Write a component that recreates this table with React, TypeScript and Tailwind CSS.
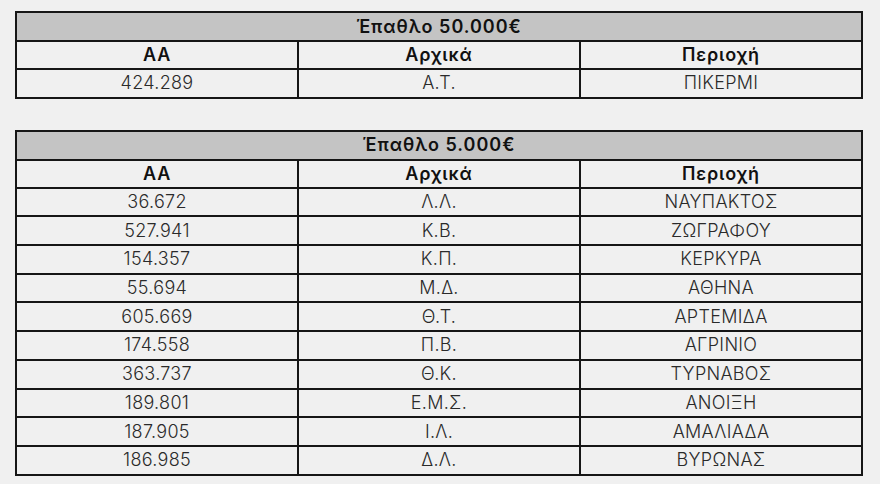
const bigPrize = [{ aa: "424.289", initials: "Α.Τ.", area: "ΠΙΚΕΡΜΙ" }];

const smallPrize = [
  { aa: "36.672", initials: "Λ.Λ.", area: "ΝΑΥΠΑΚΤΟΣ" },
  { aa: "527.941", initials: "Κ.Β.", area: "ΖΩΓΡΑΦΟΥ" },
  { aa: "154.357", initials: "Κ.Π.", area: "ΚΕΡΚΥΡΑ" },
  { aa: "55.694", initials: "Μ.Δ.", area: "ΑΘΗΝΑ" },
  { aa: "605.669", initials: "Θ.Τ.", area: "ΑΡΤΕΜΙΔΑ" },
  { aa: "174.558", initials: "Π.Β.", area: "ΑΓΡΙΝΙΟ" },
  { aa: "363.737", initials: "Θ.Κ.", area: "ΤΥΡΝΑΒΟΣ" },
  { aa: "189.801", initials: "Ε.Μ.Σ.", area: "ΑΝΟΙΞΗ" },
  { aa: "187.905", initials: "Ι.Λ.", area: "ΑΜΑΛΙΑΔΑ" },
  { aa: "186.985", initials: "Δ.Λ.", area: "ΒΥΡΩΝΑΣ" },
];

type Winner = { aa: string; initials: string; area: string };

function PrizeTable({ title, rows }: { title: string; rows: Winner[] }) {
  return (
    <table className="w-full table-fixed border-collapse text-center">
      <thead>
        <tr className="h-[29px]">
          <th colSpan={3} className="border-2 border-[#161616] bg-[#c4c4c4] text-[18px] font-semibold tracking-[1px] text-[#111] leading-none">
            {title}
          </th>
        </tr>
        <tr className="h-[28px]">
          <th className="border-2 border-[#161616] text-[18px] font-semibold tracking-[0.8px] text-[#111] leading-none">ΑΑ</th>
          <th className="border-2 border-[#161616] text-[18px] font-semibold tracking-[0.8px] text-[#111] leading-none">Αρχικά</th>
          <th className="border-2 border-[#161616] text-[18px] font-semibold tracking-[0.8px] text-[#111] leading-none">Περιοχή</th>
        </tr>
      </thead>
      <tbody>
        {rows.map((r) => (
          <tr key={r.aa} className="h-[28.7px]">
            <td className="border-2 border-[#161616] text-[18px] font-light tracking-[0.3px] text-[#2a2a2a] leading-none">{r.aa}</td>
            <td className="border-2 border-[#161616] text-[18px] font-light tracking-[0.3px] text-[#2a2a2a] leading-none">{r.initials}</td>
            <td className="border-2 border-[#161616] text-[18px] font-light tracking-[0.3px] text-[#2a2a2a] leading-none">{r.area}</td>
          </tr>
        ))}
      </tbody>
    </table>
  );
}

export default function App() {
  return (
    <div className="min-h-[484px] w-[880px] bg-[#f0f0f0] pl-[15px] pr-[17px] pt-[11px] font-['Inter',sans-serif]">
      <div className="flex flex-col gap-[31px]">
        <PrizeTable title="Έπαθλο 50.000€" rows={bigPrize} />
        <PrizeTable title="Έπαθλο 5.000€" rows={smallPrize} />
      </div>
    </div>
  );
}
